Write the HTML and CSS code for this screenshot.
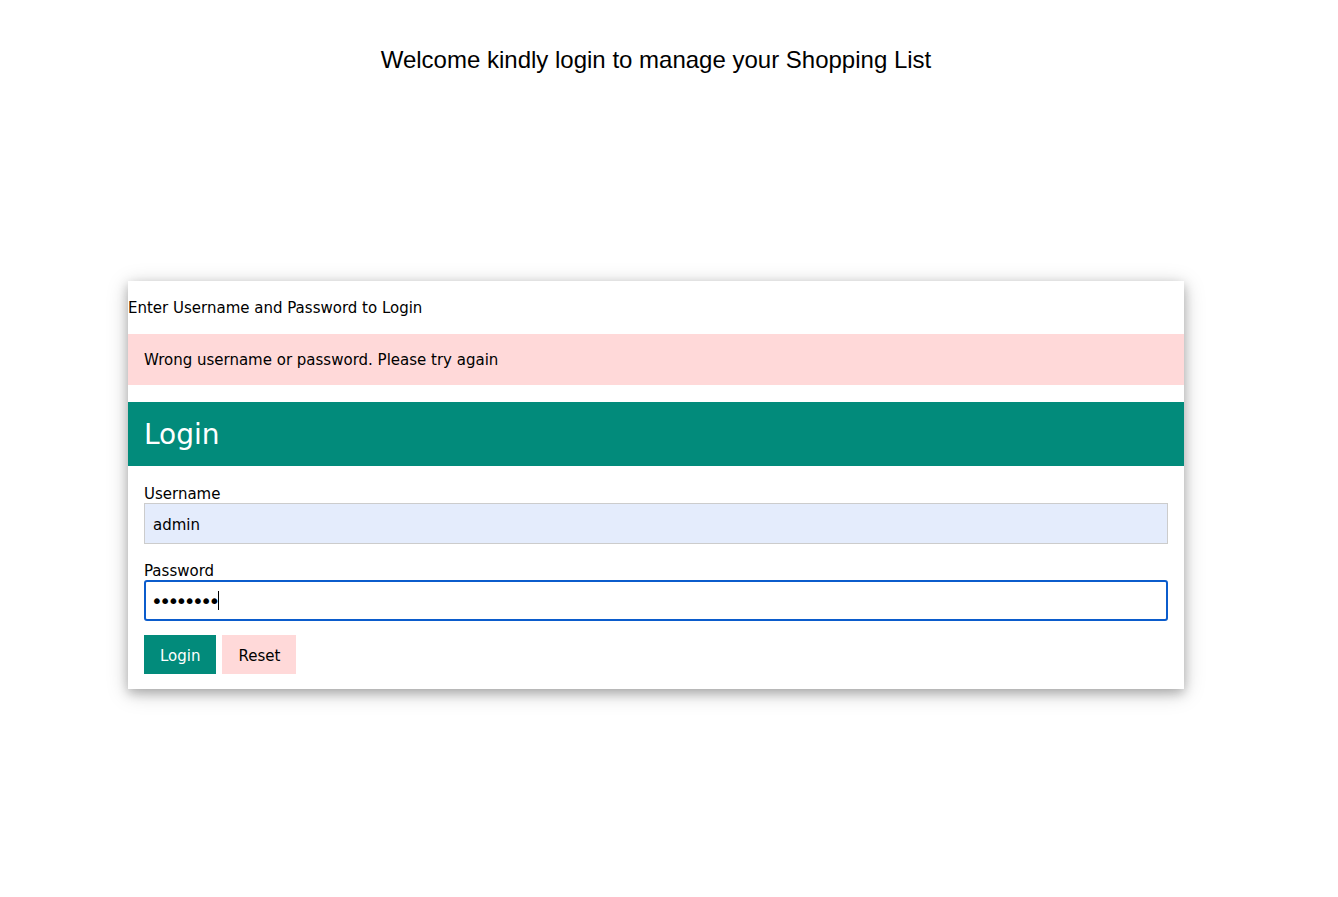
FILE: index.html
```html
<!DOCTYPE html>
<html>
<head>
<meta charset="utf-8">
<title>Shopping List Login</title>
<link rel="stylesheet" href="styles.css">
</head>
<body>
<header class="page-title">Welcome kindly login to manage your Shopping List</header>
<main class="card">
  <p class="intro">Enter Username and Password to Login</p>
  <div class="alert">Wrong username or password. Please try again</div>
  <div class="card-head"><h3>Login</h3></div>
  <form class="form">
    <label class="label" for="u">Username</label>
    <input class="input autofill" id="u" type="text" value="admin">
    <label class="label" for="p">Password</label>
    <div class="input focused"><span class="dots">••••••••</span><span class="caret"></span></div>
    <div class="buttons">
      <button type="button" class="btn btn-teal">Login</button>
      <button type="button" class="btn btn-pink">Reset</button>
    </div>
  </form>
</main>
</body>
</html>
```
FILE: styles.css
```css
html, body {
  margin: 0;
  padding: 0;
  background: #fff;
  color: #000;
  font-family: "DejaVu Sans", Verdana, sans-serif;
  font-size: 15px;
}
.page-title {
  font-family: "Liberation Sans", Arial, sans-serif;
  font-size: 24px;
  text-align: center;
  width: 1312px;
  padding-top: 45px;
  line-height: 30px;
  height: 236px;
}
.card {
  width: 1056px;
  margin-left: 128px;
  margin-bottom: 40px;
  background: #fff;
  box-shadow: 0 4px 10px 0 rgba(0,0,0,0.22), 0 4px 20px 0 rgba(0,0,0,0.21);
  padding-bottom: 15px;
}
.intro {
  margin: 0;
  padding-top: 18px;
  line-height: 18px;
  height: 35px;
}
.alert {
  background: #ffd9d9;
  padding: 0 16px;
  height: 51px;
  line-height: 53px;
  margin-bottom: 17px;
}
.card-head {
  background: #028b7b;
  color: #fff;
  height: 64px;
  padding: 0 16px;
  display: flex;
  align-items: center;
}
.card-head h3 {
  margin: 0;
  font-weight: normal;
  font-size: 28px;
  font-family: "DejaVu Sans", Verdana, sans-serif;
}
.form {
  padding: 19px 16px 0;
  display: flex;
  flex-direction: column;
}
.label {
  line-height: 18px;
  height: 18px;
}
.input {
  box-sizing: border-box;
  width: 1024px;
  height: 41px;
  font-family: "DejaVu Sans", Verdana, sans-serif;
  font-size: 15px;
  padding: 2px 8px 0;
  margin: 0 0 18px;
  border: 1px solid #ccc;
  outline: none;
  color: #000;
}
.autofill {
  background: #e4ecfc;
}
.focused {
  border: 2px solid #0b5ccc;
  border-radius: 3px;
  padding: 0 5px;
  display: flex;
  align-items: center;
  margin-bottom: 14px;
}
.dots {
  font-size: 20px;
  letter-spacing: -3.6px;
  line-height: 20px;
  padding-top: 1px;
}
.caret {
  display: inline-block;
  width: 1px;
  height: 19px;
  background: #000;
  margin-left: 1px;
}
.buttons {
  display: flex;
  gap: 6px;
}
.btn {
  border: none;
  height: 39px;
  padding: 2px 16px 0;
  font-family: "DejaVu Sans", Verdana, sans-serif;
  font-size: 15px;
  cursor: pointer;
}
.btn-teal {
  background: #028b7b;
  color: #fff;
}
.btn-pink {
  background: #ffd9d9;
  color: #000;
}
```
